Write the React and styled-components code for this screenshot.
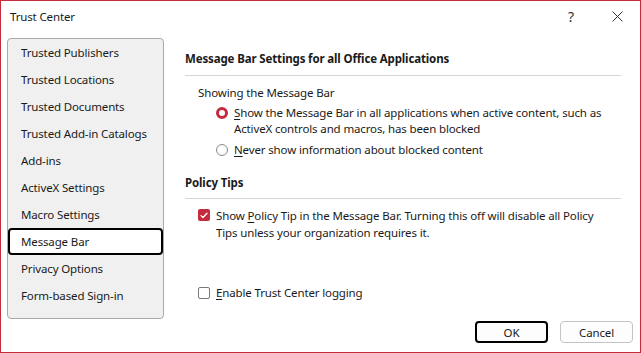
import styled, { createGlobalStyle } from "styled-components";

const GlobalStyle = createGlobalStyle`
  body {
    margin: 0;
    background: #ffffff;
    font-family: "Noto Sans", "Open Sans", sans-serif;
    font-size: 11.5px;
    letter-spacing: -0.14px;
    color: #1a1a1a;
  }
`;

const Window = styled.div`
  width: 641px;
  height: 353px;
  box-sizing: border-box;
  border: 1px solid #c42b3c;
  background: #ffffff;
  display: flex;
  flex-direction: column;
`;

const TitleBar = styled.div`
  height: 31px;
  display: flex;
  align-items: center;
  padding-left: 9px;
`;

const Title = styled.div`
  flex: 1;
`;

const TitleButton = styled.div`
  width: 46px;
  height: 31px;
  display: flex;
  align-items: center;
  justify-content: center;
  font-size: 14px;
  color: #333;
`;

const Main = styled.div`
  display: flex;
  padding: 6px 0 0 6px;
  flex: 1;
`;

const Nav = styled.div`
  width: 157px;
  height: 281px;
  box-sizing: border-box;
  border: 1px solid #a9a9a9;
  border-radius: 4px;
  background: #f0f0f0;
  flex-shrink: 0;
`;

const NavItem = styled.div`
  height: 27px;
  box-sizing: border-box;
  display: flex;
  align-items: center;
  padding-left: ${(p) => (p.$active ? "11px" : "13px")};
  border: ${(p) => (p.$active ? "2px solid #000" : "none")};
  border-radius: 4px;
  background: ${(p) => (p.$active ? "#ffffff" : "transparent")};
  white-space: nowrap;
`;

const Content = styled.div`
  margin-left: 21px;
  padding-top: 13px;
  display: flex;
  flex-direction: column;
`;

const SectionTitle = styled.div`
  font-weight: 700;
  line-height: 16px;
  margin-top: ${(p) => p.$top || 0}px;
`;

const Rule = styled.div`
  width: 436px;
  height: 1px;
  background: #d6d6d6;
  margin-top: ${(p) => p.$top}px;
`;

const Label = styled.div`
  line-height: 16px;
  margin: 9px 0 0 13px;
`;

const Option = styled.div`
  display: flex;
  align-items: flex-start;
  gap: 6px;
  line-height: ${(p) => p.$lh || 16}px;
  margin-left: ${(p) => p.$indent}px;
  margin-top: ${(p) => p.$top}px;
  white-space: nowrap;
`;

const Radio = styled.span`
  width: 12px;
  height: 12px;
  box-sizing: border-box;
  border-radius: 50%;
  flex-shrink: 0;
  margin-top: 2px;
  background: #fff;
  border: ${(p) => (p.$checked ? "3.5px solid #c42b3c" : "1px solid #8a8a8a")};
`;

const Check = styled.span`
  width: 12px;
  height: 12px;
  box-sizing: border-box;
  border-radius: 2px;
  flex-shrink: 0;
  margin-top: 2px;
  display: flex;
  align-items: center;
  justify-content: center;
  background: ${(p) => (p.$checked ? "#c42b3c" : "#fff")};
  border: ${(p) => (p.$checked ? "none" : "1px solid #7a7a7a")};
`;

const Key = styled.span`
  text-decoration: underline;
  text-underline-offset: 2px;
`;

const Footer = styled.div`
  display: flex;
  justify-content: flex-end;
  gap: 12px;
  padding: 2px 7px 0 0;
  height: 32px;
`;

const Button = styled.button`
  width: 73px;
  height: 22px;
  box-sizing: border-box;
  font-family: inherit;
  font-size: 11.5px;
  letter-spacing: -0.14px;
  color: #1a1a1a;
  border-radius: 4px;
  background: #fdfdfd;
  border: ${(p) => (p.$primary ? "2px solid #000" : "1px solid #c4c4c4")};
  padding: 0;
`;

const navItems = [
  "Trusted Publishers",
  "Trusted Locations",
  "Trusted Documents",
  "Trusted Add-in Catalogs",
  "Add-ins",
  "ActiveX Settings",
  "Macro Settings",
  "Message Bar",
  "Privacy Options",
  "Form-based Sign-in",
];

function Tick() {
  return (
    <svg width="8" height="7" viewBox="0 0 8 7">
      <path d="M1 3.6 L3 5.5 L7 1.3" fill="none" stroke="#fff" strokeWidth="1.3" strokeLinecap="round" strokeLinejoin="round" />
    </svg>
  );
}

export default function App() {
  return (
    <>
      <GlobalStyle />
      <Window>
        <TitleBar>
          <Title>Trust Center</Title>
          <TitleButton>?</TitleButton>
          <TitleButton>
            <svg width="11" height="11" viewBox="0 0 11 11">
              <path d="M0.5 0.5 L10.5 10.5 M10.5 0.5 L0.5 10.5" stroke="#333" strokeWidth="1" />
            </svg>
          </TitleButton>
        </TitleBar>
        <Main>
          <Nav>
            {navItems.map((item) => (
              <NavItem key={item} $active={item === "Message Bar"}>
                {item}
              </NavItem>
            ))}
          </Nav>
          <Content>
            <SectionTitle>Message Bar Settings for all Office Applications</SectionTitle>
            <Rule $top={8} />
            <Label>Showing the Message Bar</Label>
            <Option $indent={31} $top={4}>
              <Radio $checked />
              <span>
                <Key>S</Key>how the Message Bar in all applications when active content, such as
                <br />
                ActiveX controls and macros, has been blocked
              </span>
            </Option>
            <Option $indent={31} $top={5}>
              <Radio />
              <span>
                <Key>N</Key>ever show information about blocked content
              </span>
            </Option>
            <SectionTitle $top={17}>Policy Tips</SectionTitle>
            <Rule $top={7} />
            <Option $indent={13} $top={8} $lh={17}>
              <Check $checked>
                <Tick />
              </Check>
              <span>
                Show <Key>P</Key>olicy Tip in the Message Bar. Turning this off will disable all Policy
                <br />
                Tips unless your organization requires it.
              </span>
            </Option>
            <Option $indent={13} $top={44}>
              <Check />
              <span>
                <Key>E</Key>nable Trust Center logging
              </span>
            </Option>
          </Content>
        </Main>
        <Footer>
          <Button $primary>OK</Button>
          <Button>Cancel</Button>
        </Footer>
      </Window>
    </>
  );
}
